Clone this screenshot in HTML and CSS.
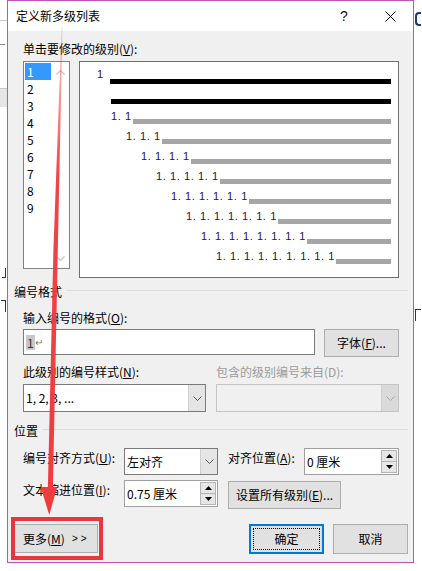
FILE: index.html
```html
<!DOCTYPE html>
<html lang="zh-CN">
<head>
<meta charset="utf-8">
<title>定义新多级列表</title>
<link rel="stylesheet" href="styles.css">
</head>
<body>
<div class="backdrop">
  <i class="bd-line bd-l1"></i>
  <i class="bd-line bd-l2"></i>
  <i class="bd-block"></i>
  <i class="bd-mark bm1"></i>
  <i class="bd-mark bm2"></i>
  <i class="bd-mark bm3"></i>
  <i class="bd-mark bm4"></i>
</div>

<div class="dialog">
  <div class="titlebar">
    <span class="title">定义新多级列表</span>
    <span class="tbtn help">?</span>
    <span class="tbtn">
      <svg width="11" height="11" viewBox="0 0 11 11"><path d="M0.5 0.5 L10.5 10.5 M10.5 0.5 L0.5 10.5" stroke="#000" stroke-width="1" fill="none"/></svg>
    </span>
  </div>

  <div class="content">
    <div class="sub">
      <div class="lbl">单击要修改的级别(<u>V</u>):</div>
      <div class="levels">
        <div class="listbox">
          <div class="items">
            <div class="item sel">1</div>
            <div class="item">2</div>
            <div class="item">3</div>
            <div class="item">4</div>
            <div class="item">5</div>
            <div class="item">6</div>
            <div class="item">7</div>
            <div class="item">8</div>
            <div class="item">9</div>
          </div>
          <div class="lscroll">
            <svg width="9" height="5" viewBox="0 0 9 5"><polyline points="0.5,4.5 4.5,0.5 8.5,4.5" fill="none" stroke="#c4c4c4" stroke-width="1.2"/></svg>
            <svg width="9" height="5" viewBox="0 0 9 5"><polyline points="0.5,0.5 4.5,4.5 8.5,0.5" fill="none" stroke="#c4c4c4" stroke-width="1.2"/></svg>
          </div>
        </div>
        <div class="preview">
          <div class="prow r0"><span class="pnum n0">1</span><i class="bar black"></i></div>
          <div class="prow r1"><i class="bar black"></i></div>
          <div class="prow d2"><span class="pnum">1. 1</span><i class="bar"></i></div>
          <div class="prow d3"><span class="pnum">1. 1. 1</span><i class="bar"></i></div>
          <div class="prow d4"><span class="pnum">1. 1. 1. 1</span><i class="bar"></i></div>
          <div class="prow d5"><span class="pnum">1. 1. 1. 1. 1</span><i class="bar"></i></div>
          <div class="prow d6"><span class="pnum">1. 1. 1. 1. 1. 1</span><i class="bar"></i></div>
          <div class="prow d7"><span class="pnum">1. 1. 1. 1. 1. 1. 1</span><i class="bar"></i></div>
          <div class="prow d8"><span class="pnum">1. 1. 1. 1. 1. 1. 1. 1</span><i class="bar"></i></div>
          <div class="prow d9"><span class="pnum">1. 1. 1. 1. 1. 1. 1. 1. 1</span><i class="bar"></i></div>
        </div>
      </div>
    </div>

    <div class="group g1"><span>编号格式</span><i class="rule"></i></div>

    <div class="sub">
      <div class="lbl m10">输入编号的格式(<u>O</u>):</div>
      <div class="fmt-row">
        <div class="field"><span class="hl">1</span><span class="ret">↵</span></div>
        <div class="btn font-btn">字体(<u>F</u>)...</div>
      </div>

      <div class="two m7">
        <div class="lbl">此级别的编号样式(<u>N</u>):</div>
        <div class="lbl dis">包含的级别编号来自(D):</div>
        <div class="combo">
          <span class="ctext">1, 2, 3, ...</span>
          <span class="cbtn"><svg width="9" height="5" viewBox="0 0 9 5"><polyline points="0.5,0.5 4.5,4.5 8.5,0.5" fill="none" stroke="#555" stroke-width="1"/></svg></span>
        </div>
        <div class="combo disabled">
          <span class="ctext"></span>
          <span class="cbtn"><svg width="9" height="5" viewBox="0 0 9 5"><polyline points="0.5,0.5 4.5,4.5 8.5,0.5" fill="none" stroke="#a8a8a8" stroke-width="1"/></svg></span>
        </div>
      </div>
    </div>

    <div class="group g2"><span>位置</span><i class="rule"></i></div>

    <div class="sub">
      <div class="pos">
        <div class="plbl">编号对齐方式(<u>U</u>):</div>
        <div class="combo small">
          <span class="ctext">左对齐</span>
          <span class="cbtn"><svg width="9" height="5" viewBox="0 0 9 5"><polyline points="0.5,0.5 4.5,4.5 8.5,0.5" fill="none" stroke="#555" stroke-width="1"/></svg></span>
        </div>
        <div class="plbl c3">对齐位置(<u>A</u>):</div>
        <div class="spin">
          <span class="ctext">0 厘米</span>
          <span class="sbtns">
            <span class="sb"><svg width="7" height="4" viewBox="0 0 7 4"><polygon points="0,4 3.5,0 7,4" fill="#000"/></svg></span>
            <span class="sb"><svg width="7" height="4" viewBox="0 0 7 4"><polygon points="0,0 3.5,4 7,0" fill="#000"/></svg></span>
          </span>
        </div>

        <div class="plbl">文本缩进位置(<u>I</u>):</div>
        <div class="spin">
          <span class="ctext">0.75 厘米</span>
          <span class="sbtns">
            <span class="sb"><svg width="7" height="4" viewBox="0 0 7 4"><polygon points="0,4 3.5,0 7,4" fill="#000"/></svg></span>
            <span class="sb"><svg width="7" height="4" viewBox="0 0 7 4"><polygon points="0,0 3.5,4 7,0" fill="#000"/></svg></span>
          </span>
        </div>
        <div class="btn all-btn">设置所有级别(<u>E</u>)...</div>
      </div>
    </div>

    <div class="footer">
      <div class="btn more-btn">更多(<u>M</u>)<span class="gt">&gt;&gt;</span></div>
      <div class="btn ok-btn">确定</div>
      <div class="btn cancel-btn">取消</div>
    </div>
  </div>
</div>

<div class="redbox"></div>
<svg class="arrow" width="422" height="571" viewBox="0 0 422 571">
  <defs>
    <linearGradient id="ag" x1="0" y1="27" x2="0" y2="515" gradientUnits="userSpaceOnUse">
      <stop offset="0" stop-color="#f03b3d" stop-opacity="0.2"/>
      <stop offset="0.3" stop-color="#f03b3d" stop-opacity="0.95"/>
      <stop offset="1" stop-color="#f03b3d" stop-opacity="1"/>
    </linearGradient>
  </defs>
  <polygon points="61.6,27 62.5,27 57.8,250 52.9,487 57.2,487 49.2,515 40.8,487 47.9,487 53.4,250" fill="url(#ag)"/>
</svg>
</body>
</html>
```

FILE: styles.css
```css
* { box-sizing: border-box; }
html, body { margin: 0; padding: 0; }
body {
  width: 422px;
  height: 571px;
  overflow: hidden;
  position: relative;
  background: #fff;
  font-family: "Noto Sans CJK SC", "Microsoft YaHei", sans-serif;
  font-size: 12px;
  line-height: 16px;
  color: #000;
}
u { text-decoration: underline; text-underline-offset: 1px; }

/* background document (behind the dialog) */
.backdrop { position: absolute; left: 0; top: 0; width: 422px; height: 571px; overflow: hidden; }
.bd-line { position: absolute; left: 0; width: 7px; height: 1px; background: #c8c8c8; }
.bd-l1 { top: 20px; }
.bd-l2 { top: 44px; width: 5px; background: #888; }
.bd-block { position: absolute; left: 0; top: 88px; width: 7px; height: 19px; background: #e6e6e6; border-top: 1px solid #c8c8c8; }
.bd-mark { position: absolute; background: #333; }
.bm1 { left: 2px; top: 268px; width: 4px; height: 10px; background: transparent; border-right: 1px solid #333; border-bottom: 1px solid #333; }
.bm2 { left: 1px; top: 300px; width: 5px; height: 12px; background: transparent; border-right: 1px solid #333; border-top: 1px solid #333; }
.bm3 { left: 415px; top: 12px; width: 6px; height: 14px; background: transparent; border-left: 2px solid #1e3c78; border-top: 2px solid #1e3c78; border-bottom: 2px solid #1e3c78; border-radius: 4px 0 0 4px; }
.bm4 { left: 415px; top: 309px; width: 6px; height: 12px; background: transparent; border-left: 1px solid #333; border-top: 1px solid #333; }

/* dialog frame */
.dialog {
  position: relative;
  margin-left: 7px;
  width: 407px;
  height: 563px;
  border: 1px solid #c150c0;
  background: #f0f0f0;
  display: flex;
  flex-direction: column;
}
.titlebar {
  height: 30px;
  flex-shrink: 0;
  background: #fff;
  display: flex;
  align-items: center;
  padding-left: 8px;
}
.title { flex: 1; }
.tbtn {
  width: 46px;
  height: 30px;
  display: flex;
  align-items: center;
  justify-content: center;
}
.help { font-family: "Liberation Sans", sans-serif; font-size: 14px; color: #111; }

.content { padding: 10px 5px 0 6px; }
.sub { padding: 0 9px; }
.lbl { height: 16px; white-space: nowrap; }
.lbl.dis { color: #9b9b9b; }
.m10 { margin-top: 10px; }
.m7 { margin-top: 7px; }

/* levels */
.levels { display: flex; align-items: flex-start; margin-top: 4px; }
.listbox {
  width: 47px;
  height: 208px;
  border: 1px solid #828282;
  background: #fff;
  display: flex;
  padding: 1px 0 1px 1px;
  margin-right: 9px;
}
.items { width: 26px; }
.item { height: 17px; line-height: 17px; padding-left: 2px; }
.item.sel { background: #3399ff; color: #fff; }
.lscroll {
  flex: 1;
  display: flex;
  flex-direction: column;
  justify-content: space-between;
  align-items: center;
  padding: 7px 0 6px;
}
.lscroll svg { display: block; }

.preview {
  width: 320px;
  height: 217px;
  border: 1px solid #6e6e6e;
  background: #fff;
  padding: 4px 7px 0 0;
}
.prow { height: 20px; display: flex; align-items: center; }
.r0 { padding-left: 17px; }
.r1 { padding-left: 30px; }
.d2 { padding-left: 31px; }
.d3 { padding-left: 46px; }
.d4 { padding-left: 61px; }
.d5 { padding-left: 76px; }
.d6 { padding-left: 91px; }
.d7 { padding-left: 106px; }
.d8 { padding-left: 121px; }
.d9 { padding-left: 136px; }
.pnum {
  font-family: "Liberation Sans", Arial, sans-serif;
  font-size: 11px;
  line-height: 13px;
  letter-spacing: 0.6px;
  white-space: pre;
  color: #18184a;
}
.pnum.n0 { width: 13px; letter-spacing: 0; margin-top: -3px; }
.bar { flex: 1; height: 5px; margin-top: 10px; margin-left: 1px; background: #a6a6a6; }
.r0 .bar { margin-left: 0; }
.bar.black { background: #000; }

/* group headers */
.group { display: flex; align-items: flex-start; height: 16px; }
.g1 { margin-top: 6px; }
.g2 { margin-top: 11px; }
.group span { white-space: nowrap; }
.rule { flex: 1; height: 1px; background: #dcdcdc; margin: 6px 0 0 5px; }

/* format row */
.fmt-row { display: flex; align-items: flex-start; margin-top: 3px; }
.field {
  width: 292px;
  height: 26px;
  border: 1px solid #7a7a7a;
  background: #fff;
  display: flex;
  align-items: center;
  padding-left: 2px;
}
.hl { background: #c8c8c8; color: #333; padding: 0 1px; line-height: 15px; }
.ret { color: #808080; font-size: 10px; }

.btn {
  background: #e1e1e1;
  border: 1px solid #adadad;
  display: flex;
  align-items: center;
  justify-content: center;
  white-space: nowrap;
}
.font-btn { width: 75px; height: 28px; margin-left: auto; }

.two {
  display: grid;
  grid-template-columns: 183px 183px;
  column-gap: 10px;
  row-gap: 4px;
}
.combo {
  height: 28px;
  border: 1px solid #7a7a7a;
  background: #fff;
  display: flex;
}
.combo.small { height: 27px; }
.ctext { flex: 1; display: flex; align-items: center; padding-left: 2px; white-space: nowrap; }
.cbtn {
  width: 17px;
  background: #e5e5e5;
  border-left: 1px solid #cfcfcf;
  display: flex;
  align-items: center;
  justify-content: center;
}
.combo.disabled { background: #f0f0f0; border-color: #c4c4c4; }
.combo.disabled .cbtn { background: #dadada; border-left-color: #cfcfcf; }

/* position grid */
.pos {
  display: grid;
  grid-template-columns: 101px 94px 86px 95px;
  grid-template-rows: 27px 27px;
  row-gap: 5px;
  margin-top: 9px;
}
.plbl { align-self: start; margin-top: 2px; white-space: nowrap; }
.plbl.c3 { padding-left: 10px; }
.spin {
  height: 27px;
  border: 1px solid #a0a0a0;
  background: #fff;
  display: flex;
}
.sbtns { width: 17px; display: flex; flex-direction: column; padding: 1px 1px 1px 0; }
.sb {
  flex: 1;
  background: #e6e6e6;
  border: 1px solid #b4b4b4;
  display: flex;
  align-items: center;
  justify-content: center;
}
.sb + .sb { border-top: none; }
.all-btn {
  grid-column: 3 / 5;
  justify-self: start;
  align-self: start;
  margin: 1px 0 0 10px;
  width: 113px;
  height: 28px;
}

/* footer */
.footer { display: flex; align-items: flex-start; margin-top: 17px; }
.more-btn { width: 84px; height: 29px; justify-content: flex-start; padding-left: 8px; }
.gt { font-family: "Liberation Sans", sans-serif; font-size: 10px; letter-spacing: 3px; margin-left: 7px; }
.ok-btn {
  width: 75px;
  height: 30px;
  margin-left: auto;
  border: 2px solid #0078d7;
  outline: 1px dotted #000;
  outline-offset: -5px;
}
.cancel-btn { width: 75px; height: 30px; margin-left: 9px; }

/* annotations */
.redbox {
  position: absolute;
  left: 11px;
  top: 517px;
  width: 92px;
  height: 43px;
  border: 4px solid #e8363a;
}
.arrow { position: absolute; left: 0; top: 0; pointer-events: none; }
```
